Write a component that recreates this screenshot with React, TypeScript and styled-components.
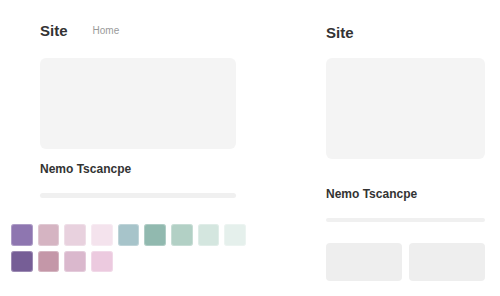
import React from "react";
import styled, { createGlobalStyle } from "styled-components";

const Global = createGlobalStyle`
  html, body { margin: 0; padding: 0; background: #ffffff; }
  body { font-family: "Liberation Sans", Arial, sans-serif; color: #333333; }
`;

const Page = styled.div`
  width: 500px;
  height: 296px;
  display: flex;
  overflow: hidden;
`;

const LeftCol = styled.div`
  width: 250px;
  display: flex;
  flex-direction: column;
`;

const Frame = styled.div<{ $left: number; $width: number; $top: number }>`
  margin-left: ${(p) => p.$left}px;
  width: ${(p) => p.$width}px;
  padding-top: ${(p) => p.$top}px;
  display: flex;
  flex-direction: column;
`;

const Header = styled.div`
  display: flex;
  align-items: center;
  gap: 25px;
  height: 18px;
`;

const Logo = styled.div`
  font-size: 15px;
  line-height: 18px;
  font-weight: 700;
  color: #333333;
`;

const NavLink = styled.div`
  font-size: 10px;
  line-height: 12px;
  color: #9a9a9a;
`;

const Hero = styled.div<{ $mt: number; $h: number }>`
  margin-top: ${(p) => p.$mt}px;
  height: ${(p) => p.$h}px;
  background: #f4f4f4;
  border-radius: 6px;
`;

const Title = styled.div<{ $mt: number }>`
  margin-top: ${(p) => p.$mt}px;
  font-size: 12px;
  line-height: 14px;
  font-weight: 700;
  color: #333333;
`;

const Bar = styled.div<{ $mt: number }>`
  margin-top: ${(p) => p.$mt}px;
  height: 4.4px;
  background: #f0f0f0;
  border-radius: 3px;
`;

const Palette = styled.div`
  margin-left: 11px;
  margin-top: 26.6px;
  display: grid;
  grid-template-columns: repeat(9, 21.67px);
  grid-auto-rows: 21.67px;
  gap: 5px;
`;

const Swatch = styled.div<{ $c: string }>`
  background: ${(p) => p.$c};
  border-radius: 3px;
  box-shadow: inset 0 0 0 1px rgba(255, 255, 255, 0.28);
`;

const RightCol = styled.div`
  margin-left: 76px;
  width: 159px;
  display: flex;
  flex-direction: column;
`;

const Cards = styled.div`
  margin-top: 20.7px;
  display: grid;
  grid-template-columns: 1fr 1fr;
  gap: 7.5px;
`;

const Card = styled.div`
  height: 37.7px;
  background: #eeeeee;
  border-radius: 4px;
`;

const colors = [
  "#8e76b0",
  "#d5b4c2",
  "#e8d1de",
  "#f4e3ed",
  "#a7c4ca",
  "#91b9af",
  "#b2d0c5",
  "#d4e6df",
  "#e5f0ec",
  "#765e96",
  "#c497a8",
  "#dab8cd",
  "#eccadf",
];

export default function App() {
  return (
    <>
      <Global />
      <Page>
        <LeftCol>
          <Frame $left={40} $width={196} $top={21.5}>
            <Header>
              <Logo>Site</Logo>
              <NavLink>Home</NavLink>
            </Header>
            <Hero $mt={18.5} $h={90.7} />
            <Title $mt={13.8}>Nemo Tscancpe</Title>
            <Bar $mt={16.7} />
          </Frame>
          <Palette>
            {colors.map((c, i) => (
              <Swatch key={i} $c={c} />
            ))}
          </Palette>
        </LeftCol>
        <RightCol>
          <Frame $left={0} $width={159} $top={23.8}>
            <Header>
              <Logo>Site</Logo>
            </Header>
            <Hero $mt={16.2} $h={101.3} />
            <Title $mt={27.6}>Nemo Tscancpe</Title>
            <Bar $mt={17.1} />
            <Cards>
              <Card />
              <Card />
            </Cards>
          </Frame>
        </RightCol>
      </Page>
    </>
  );
}
